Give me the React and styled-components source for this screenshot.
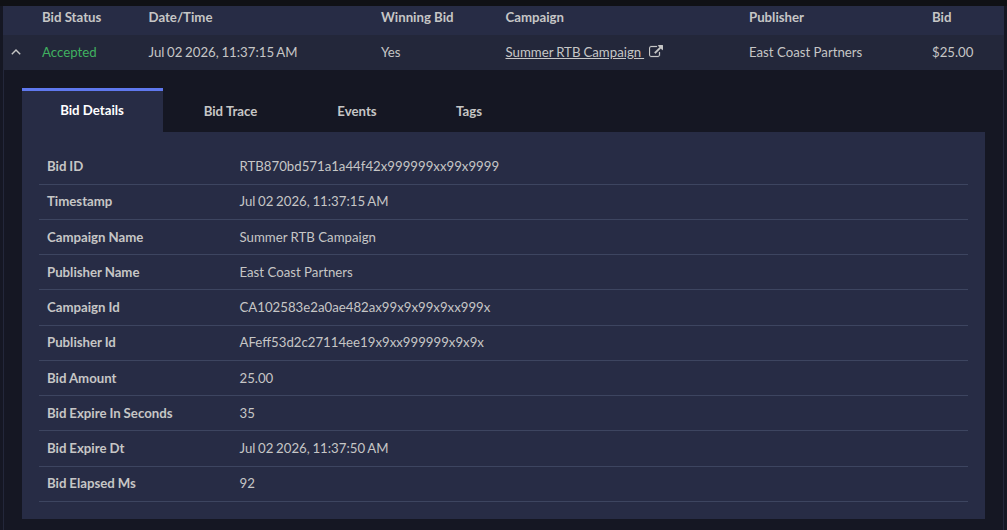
import React from "react";
import styled, { createGlobalStyle } from "styled-components";

const GlobalStyle = createGlobalStyle`
  * {
    box-sizing: border-box;
  }

  body {
    margin: 0;
    background: #151723;
    font-family: Lato, "Liberation Sans", sans-serif;
    font-size: 13.22px;
    color: #c6c6c6;
  }
`;

// ==================== LAYOUT ====================
const Page = styled.div`
  height: 530px;
  border-top: 6px solid #101115;
  padding: 0 3px;
  overflow: hidden;
`;

const GridRow = styled.div`
  display: grid;
  grid-template-columns: 39px 106.5px 232.5px 124.5px 243.5px 183px 1fr;
  align-items: center;
`;

const HeaderRow = styled(GridRow)`
  height: 29px;
  padding-bottom: 7px;
  background: #272c45;
  font-weight: 700;
`;

const BidRow = styled(GridRow)`
  height: 35px;
  padding-bottom: 1px;
  background: #23273a;
`;

const ChevronCell = styled.div`
  display: flex;
  padding: 0 0 1px 8px;
`;

const Status = styled.span`
  color: #40b160;
`;

const DateText = styled.span`
  word-spacing: -0.7px;
`;

const CampaignCell = styled.div`
  display: flex;
  align-items: center;
  gap: 5px;
`;

const CampaignLink = styled.a`
  color: inherit;
  text-decoration: underline;
  word-spacing: -0.4px;
  white-space: pre;
  cursor: pointer;
`;

const Expanded = styled.div`
  height: 460px;
  padding: 18px 18px 0;
  border: 1px solid #23273a;
  border-width: 0 1px;
`;

// ==================== TABS ====================
const Tabs = styled.div`
  display: flex;
  height: 44px;
`;

const Tab = styled.button`
  width: ${({ $width }) => $width}px;
  padding: ${({ $active }) => ($active ? "0 1px 3px 0" : "2px 0 0")};
  border: 0;
  border-top: ${({ $active }) => ($active ? "3px solid #5f78ee" : "0")};
  background: ${({ $active }) => ($active ? "#272c45" : "transparent")};
  color: ${({ $active }) => ($active ? "#ffffff" : "#c6c6c6")};
  font: inherit;
  font-weight: 700;
  text-align: center;
  cursor: pointer;
`;

const Panel = styled.div`
  height: 387px;
  padding: 17.6px 17px 0;
  background: #272c45;
`;

const DetailRow = styled.div`
  display: grid;
  grid-template-columns: 192.5px 1fr;
  align-items: center;
  height: 35.22px;
  padding: 0 0 0.95px 8px;
  border-bottom: 1px solid #3d4560;
`;

const Label = styled.span`
  font-weight: 700;
  word-spacing: -0.3px;
`;

// ==================== DATA ====================
const headers = [
  "",
  "Bid Status",
  "Date/Time",
  "Winning Bid",
  "Campaign",
  "Publisher",
  "Bid",
];

const tabs = [
  { label: "Bid Details", width: 141 },
  { label: "Bid Trace", width: 135 },
  { label: "Events", width: 118 },
  { label: "Tags", width: 106 },
];

const details = [
  { label: "Bid ID", value: "RTB870bd571a1a44f42x999999xx99x9999" },
  { label: "Timestamp", value: "Jul 02 2026, 11:37:15 AM", isDate: true },
  { label: "Campaign Name", value: "Summer RTB Campaign" },
  { label: "Publisher Name", value: "East Coast Partners" },
  { label: "Campaign Id", value: "CA102583e2a0ae482ax99x9x99x9xx999x" },
  { label: "Publisher Id", value: "AFeff53d2c27114ee19x9xx999999x9x9x" },
  { label: "Bid Amount", value: "25.00" },
  { label: "Bid Expire In Seconds", value: "35" },
  { label: "Bid Expire Dt", value: "Jul 02 2026, 11:37:50 AM", isDate: true },
  { label: "Bid Elapsed Ms", value: "92" },
];

const ChevronUp = () => (
  <svg width="10" height="6" viewBox="0 0 10 6" fill="none">
    <path d="M0.8 5.2 L5 1 L9.2 5.2" stroke="#c6c6c6" strokeWidth="1.4" />
  </svg>
);

const ExternalLink = () => (
  <svg
    width="14"
    height="14"
    viewBox="0 0 1792 1792"
    fill="#c6c6c6"
    stroke="#c6c6c6"
    strokeWidth="30"
  >
    <path d="M1408 928v320q0 119-84.5 203.5t-203.5 84.5h-832q-119 0-203.5-84.5t-84.5-203.5v-832q0-119 84.5-203.5t203.5-84.5h704q14 0 23 9t9 23v64q0 14-9 23t-23 9h-704q-66 0-113 47t-47 113v832q0 66 47 113t113 47h832q66 0 113-47t47-113v-320q0-14 9-23t23-9h64q14 0 23 9t9 23zm384-864v512q0 26-19 45t-45 19-45-19l-176-176-652 652q-10 10-23 10t-23-10l-114-114q-10-10-10-23t10-23l652-652-176-176q-19-19-19-45t19-45 45-19h512q26 0 45 19t19 45z" />
  </svg>
);

const App = () => {
  const [activeTab, setActiveTab] = React.useState("Bid Details");

  return (
    <>
      <GlobalStyle />
      <Page>
        <HeaderRow>
          {headers.map((header) => (
            <span key={header}>{header}</span>
          ))}
        </HeaderRow>
        <BidRow>
          <ChevronCell>
            <ChevronUp />
          </ChevronCell>
          <Status>Accepted</Status>
          <DateText>Jul 02 2026, 11:37:15 AM</DateText>
          <span>Yes</span>
          <CampaignCell>
            <CampaignLink>{"Summer RTB Campaign "}</CampaignLink>
            <ExternalLink />
          </CampaignCell>
          <span>East Coast Partners</span>
          <span>$25.00</span>
        </BidRow>

        <Expanded>
          <Tabs>
            {tabs.map(({ label, width }) => (
              <Tab
                key={label}
                $width={width}
                $active={label === activeTab}
                onClick={() => setActiveTab(label)}
              >
                {label}
              </Tab>
            ))}
          </Tabs>
          <Panel>
            {details.map(({ label, value, isDate }) => (
              <DetailRow key={label}>
                <Label>{label}</Label>
                {isDate ? <DateText>{value}</DateText> : <span>{value}</span>}
              </DetailRow>
            ))}
          </Panel>
        </Expanded>
      </Page>
    </>
  );
};

export default App;
